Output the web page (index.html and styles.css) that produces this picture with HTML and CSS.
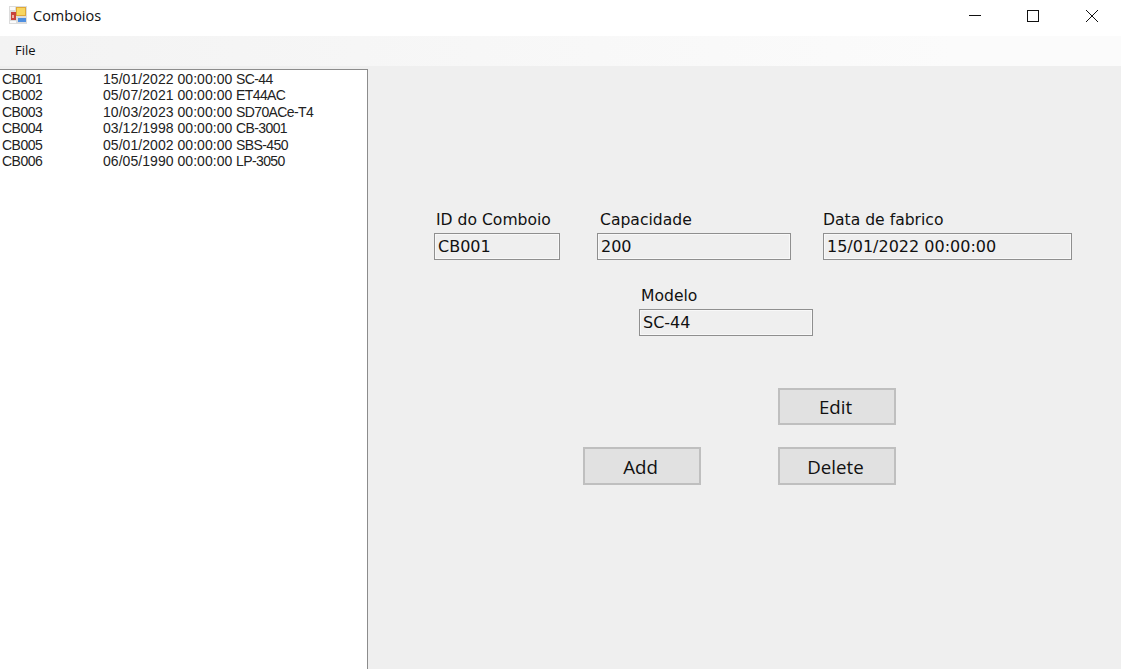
FILE: index.html
```html
<!DOCTYPE html>
<html lang="pt">
<head>
    <meta charset="UTF-8">
    <meta name="viewport" content="width=device-width, initial-scale=1.0">
    <title>Comboios</title>
    <link rel="stylesheet" href="styles.css">
</head>
<body>
    <header class="titlebar">
        <svg class="app-icon" width="18" height="18" viewBox="0 0 18 18">
            <rect x="0" y="0" width="18" height="18" fill="#dcdcdc"/>
            <rect x="1" y="1" width="5" height="3" fill="#fafafa"/>
            <rect x="1" y="15" width="6" height="2" fill="#fafafa"/>
            <rect x="2" y="6" width="5" height="8" fill="#c8423c"/>
            <rect x="3" y="9" width="2" height="3" fill="#f0b0a0"/>
            <rect x="7" y="1" width="10" height="9" fill="#e0a838"/>
            <rect x="8" y="2" width="8" height="7" fill="#f8d660"/>
            <rect x="9" y="12" width="8" height="4" fill="#4f8fe0"/>
        </svg>
        <span class="app-title">Comboios</span>
        <div class="win-controls">
            <svg class="win-btn" width="58" height="30" viewBox="0 0 58 30">
                <path d="M10 15.5H22" stroke="#111" fill="none"/>
            </svg>
            <svg class="win-btn" width="58" height="30" viewBox="0 0 58 30">
                <rect x="10.5" y="10.5" width="11" height="11" stroke="#111" fill="none"/>
            </svg>
            <svg class="win-btn" width="58" height="30" viewBox="0 0 58 30">
                <path d="M11 10L23 22M23 10L11 22" stroke="#111" fill="none"/>
            </svg>
        </div>
    </header>

    <nav class="menubar">
        <span class="menu-item">File</span>
    </nav>

    <main class="content">
        <div class="listbox">
            <div class="list-row"><span class="col-id">CB001</span><span class="col-date">15/01/2022 00:00:00</span><span class="col-model">SC-44</span></div>
            <div class="list-row"><span class="col-id">CB002</span><span class="col-date">05/07/2021 00:00:00</span><span class="col-model">ET44AC</span></div>
            <div class="list-row"><span class="col-id">CB003</span><span class="col-date">10/03/2023 00:00:00</span><span class="col-model">SD70ACe-T4</span></div>
            <div class="list-row"><span class="col-id">CB004</span><span class="col-date">03/12/1998 00:00:00</span><span class="col-model">CB-3001</span></div>
            <div class="list-row"><span class="col-id">CB005</span><span class="col-date">05/01/2002 00:00:00</span><span class="col-model">SBS-450</span></div>
            <div class="list-row"><span class="col-id">CB006</span><span class="col-date">06/05/1990 00:00:00</span><span class="col-model">LP-3050</span></div>
        </div>

        <section class="form">
            <div class="row row-top">
                <div class="field field-id">
                    <label>ID do Comboio</label>
                    <div class="textbox">CB001</div>
                </div>
                <div class="field field-cap">
                    <label>Capacidade</label>
                    <div class="textbox">200</div>
                </div>
                <div class="field field-data">
                    <label>Data de fabrico</label>
                    <div class="textbox">15/01/2022 00:00:00</div>
                </div>
            </div>
            <div class="row row-modelo">
                <div class="field field-modelo">
                    <label>Modelo</label>
                    <div class="textbox">SC-44</div>
                </div>
            </div>
            <div class="row row-edit">
                <button class="btn">Edit</button>
            </div>
            <div class="row row-actions">
                <button class="btn">Add</button>
                <button class="btn">Delete</button>
            </div>
        </section>
    </main>
</body>
</html>
```

FILE: styles.css
```css
html, body {
    height: 100%;
}

body {
    margin: 0;
    display: flex;
    flex-direction: column;
    overflow: hidden;
    background: #efefef;
    color: #111;
    font-family: "DejaVu Sans", Verdana, sans-serif;
}

.titlebar {
    height: 30px;
    padding-bottom: 6px;
    display: flex;
    align-items: center;
    background: white;
    flex-shrink: 0;
}

.app-icon {
    margin-left: 9px;
    margin-right: 6px;
}

.app-title {
    font-family: "Open Sans", sans-serif;
    font-size: 14.5px;
    color: #111;
}

.win-controls {
    margin-left: auto;
    display: flex;
    align-items: center;
    margin-right: -12px;
}

.menubar {
    height: 30px;
    display: flex;
    align-items: center;
    flex-shrink: 0;
    background: linear-gradient(to right, #f3f3f3, #fbfbfb 85%);
}

.menu-item {
    margin-left: 15px;
    margin-bottom: 2px;
    font-family: "Open Sans", sans-serif;
    font-size: 13px;
}

.content {
    flex: 1;
    display: flex;
    min-height: 0;
    padding-top: 3px;
}

.listbox {
    width: 365px;
    background: white;
    border: 1px solid #8c8c8c;
    border-left: 0;
    border-bottom: 0;
    padding: 1px 0 0 2px;
    font-family: "Liberation Sans", Arial, sans-serif;
    font-size: 14px;
    line-height: 16.4px;
    color: #222;
}

.list-row {
    display: grid;
    grid-template-columns: 101px 133px 1fr;
    white-space: nowrap;
}

.col-id {
    letter-spacing: -0.5px;
}

.col-date {
    letter-spacing: 0.05px;
}

.col-model {
    letter-spacing: -0.6px;
}

.form {
    flex: 1;
    padding-top: 142px;
    padding-left: 66px;
}

.row {
    display: flex;
}

.field label {
    display: block;
    font-size: 15.6px;
    line-height: 18px;
    margin-bottom: 4px;
    padding-left: 2px;
}

.textbox {
    height: 27px;
    box-sizing: border-box;
    border: 1px solid #8f8f8f;
    box-shadow: inset 0 0 0 1px #f8f8f8;
    padding-left: 3px;
    font-size: 16px;
    line-height: 25px;
    background: #efefef;
}

.field-id {
    width: 126px;
    margin-right: 37px;
}

.field-cap {
    width: 194px;
    margin-right: 32px;
}

.field-cap label {
    padding-left: 3px;
}

.field-data {
    width: 249px;
}

.field-data label {
    padding-left: 0;
}

.row-modelo {
    margin-top: 27px;
    margin-left: 205px;
}

.field-modelo {
    width: 174px;
}

.row-edit {
    margin-top: 52px;
    margin-left: 344px;
}

.row-actions {
    margin-top: 22px;
    margin-left: 149px;
    gap: 77px;
}

.btn {
    width: 118px;
    height: 38px;
    padding: 0 3px 0 0;
    box-sizing: border-box;
    border: 2px solid #bfbfbf;
    background: #e1e1e1;
    color: #111;
    font-family: "Open Sans", sans-serif;
    font-size: 18.7px;
}

.row-edit .btn {
    height: 37px;
}
```
